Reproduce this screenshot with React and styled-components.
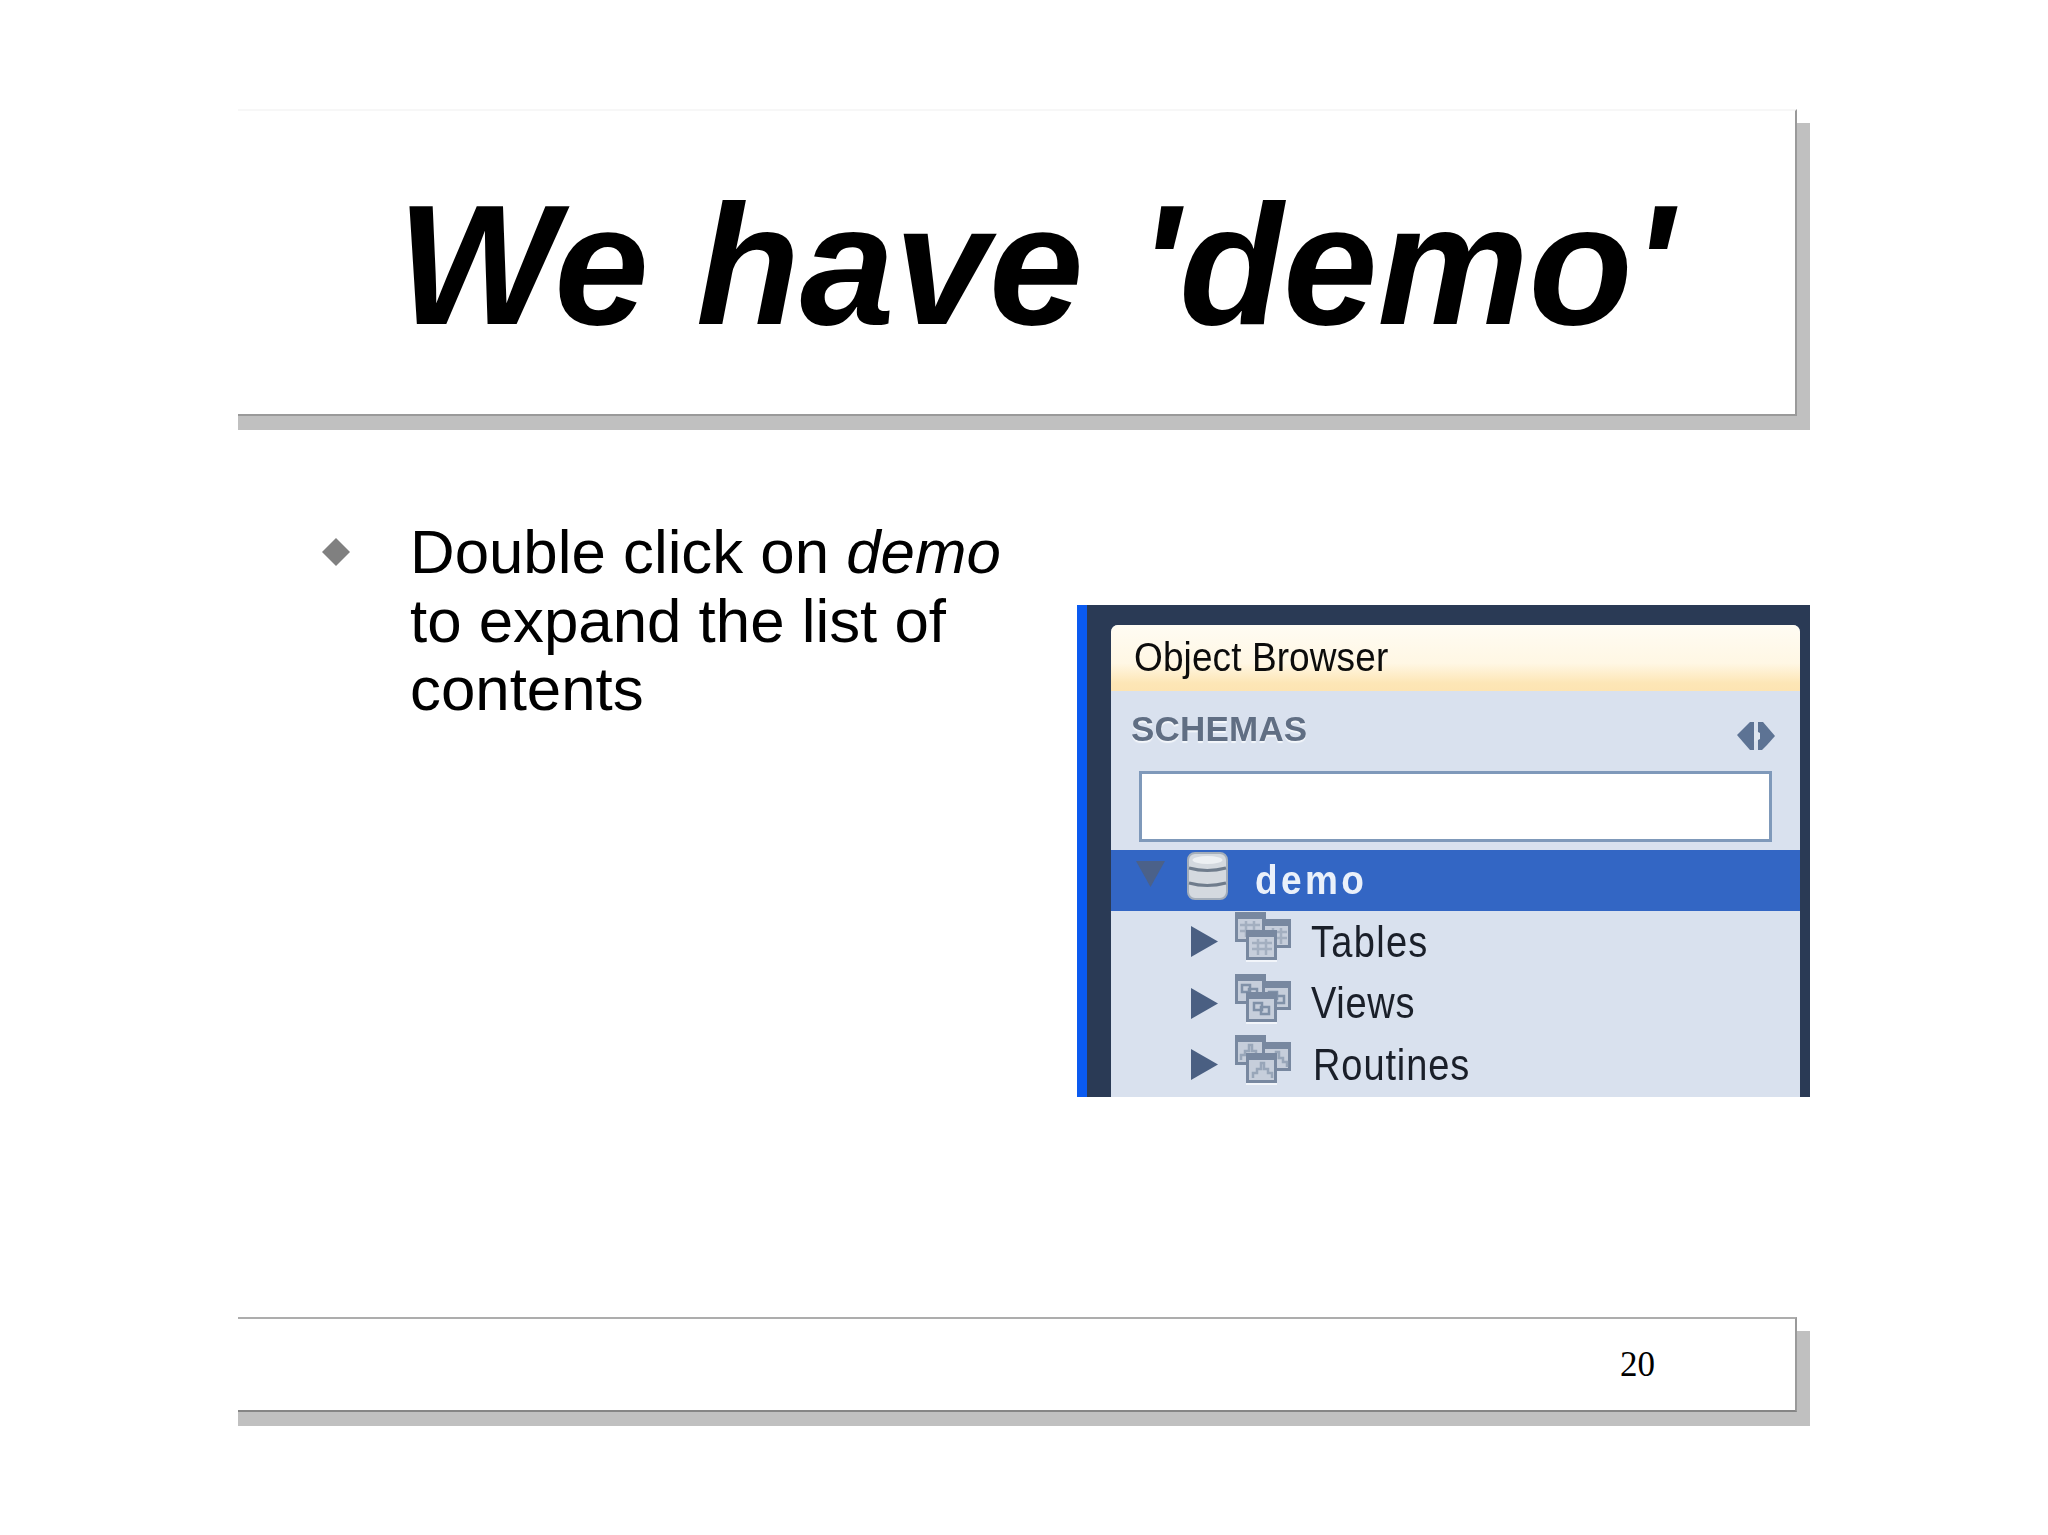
import React from "react";
import styled, { createGlobalStyle } from "styled-components";

const Global = createGlobalStyle`
  html, body { margin: 0; padding: 0; background: #fff; }
  body { font-family: "Liberation Sans", Arial, sans-serif; color: #000; }
`;

const Page = styled.div`
  width: 1559px;
  height: 1535px;
  box-sizing: border-box;
  margin-left: 238px;
  padding-top: 109px;
  display: flex;
  flex-direction: column;
`;

const TitleBox = styled.header`
  height: 307px;
  box-sizing: border-box;
  border-top: 2px solid #f7f7f7;
  border-right: 2px solid #9a9a9a;
  border-bottom: 2px solid #9a9a9a;
  background: #fff;
  box-shadow: 13px 14px 0 #c0c0c0, 0 14px 0 #c0c0c0;
  display: flex;
  align-items: center;
  justify-content: flex-end;
  padding-right: 122px;
`;

const Title = styled.h1`
  margin: 4px 0 0;
  font: italic 700 170px/1 "Liberation Sans", Arial, sans-serif;
  white-space: nowrap;
`;

const QuotedWord = styled.span`
  margin-left: 8px;
`;

const Content = styled.main`
  flex: none;
  height: 901px;
  display: flex;
  justify-content: space-between;
`;

const BulletColumn = styled.section`
  display: flex;
  padding: 102px 0 0 84px;
  gap: 60px;
`;

const Diamond = styled.svg`
  width: 28px;
  height: 28px;
  margin-top: 20px;
  flex: none;
`;

const BodyText = styled.p`
  margin: 0;
  width: 640px;
  font-size: 61.8px;
  line-height: 68.6px;
`;

const Shot = styled.figure`
  margin: 189px -13px 0 0;
  width: 733px;
  height: 492px;
  box-sizing: border-box;
  border-left: 10px solid #0a5af0;
  background: #2a3a55;
  padding: 20px 10px 0 24px;
  overflow: hidden;
`;

const Panel = styled.div`
  height: 472px;
  background: #d9e1ee;
  border-radius: 7px 7px 0 0;
  overflow: hidden;
`;

const PanelHeader = styled.div`
  height: 66px;
  box-sizing: border-box;
  padding-left: 23px;
  display: flex;
  align-items: center;
  background: linear-gradient(#fffcf3 0, #fff7e4 58%, #fde6b6 88%, #fde4b2 100%);
`;

const PanelTitle = styled.span`
  font-size: 37px;
  letter-spacing: 0.1px;
  color: #0c0c0c;
  transform: scaleY(1.08);
  filter: blur(0.5px);
  white-space: nowrap;
`;

const SchemasRow = styled.div`
  height: 80px;
  box-sizing: border-box;
  padding: 18px 24px 0 20px;
  display: flex;
  justify-content: space-between;
  align-items: flex-start;
`;

const SchemasLabel = styled.span`
  font-size: 35px;
  font-weight: 700;
  line-height: 40px;
  letter-spacing: 0.2px;
  color: #606e83;
  text-shadow: 0 2px 1px #f4f7fb;
  filter: blur(0.7px);
`;

const Refresh = styled.svg`
  width: 40px;
  height: 32px;
  margin-top: 11px;
  filter: blur(0.7px);
`;

const SearchBox = styled.div`
  height: 71px;
  box-sizing: border-box;
  margin: 0 28px 8px;
  border: 3px solid #7f99ba;
  background: #fff;
`;

const SchemaRow = styled.div`
  height: 61px;
  background: #3366c4;
  display: flex;
  align-items: center;
  padding-left: 25px;
`;

const DownArrow = styled.svg`
  width: 29px;
  height: 26px;
  margin-top: -14px;
  flex: none;
`;

const DbIcon = styled.svg`
  width: 41px;
  height: 48px;
  margin-left: 22px;
  margin-top: -10px;
  flex: none;
  filter: blur(0.5px);
`;

const SchemaName = styled.span`
  margin-left: 27px;
  font-size: 37px;
  font-weight: 700;
  letter-spacing: 3.4px;
  color: #eaf0fa;
  transform: scaleY(1.08);
  filter: blur(0.7px);
`;

const TreeRow = styled.div`
  height: 61.5px;
  display: flex;
  align-items: center;
  padding-left: 80px;
`;

const RightArrow = styled.svg`
  width: 27px;
  height: 31px;
  flex: none;
`;

const FolderIcon = styled.svg`
  width: 56px;
  height: 50px;
  margin-left: 17px;
  margin-top: -9px;
  flex: none;
  filter: blur(0.5px);
`;

const TreeLabel = styled.span`
  margin-left: ${(p) => p.$gap}px;
  font-size: 38px;
  letter-spacing: ${(p) => p.$tracking}px;
  line-height: 1;
  color: #1a1f29;
  transform: scaleY(1.16);
  filter: blur(0.6px);
  white-space: nowrap;
`;

const Footer = styled.footer`
  height: 95px;
  box-sizing: border-box;
  border-top: 2px solid #adadad;
  border-right: 2px solid #9a9a9a;
  border-bottom: 2px solid #858585;
  background: #fff;
  box-shadow: 13px 14px 0 #c0c0c0, 0 14px 0 #c0c0c0;
  display: flex;
  align-items: center;
  justify-content: flex-end;
  padding-right: 140px;
`;

const PageNumber = styled.span`
  font: 35px/1 "Liberation Serif", "Times New Roman", serif;
`;

const Mini = ({ glyph }) => {
  const win = (x, y, w, h) => (
    <g>
      <rect x={x + 1.5} y={y + 1.5} width={w - 3} height={h - 3} fill="#c6cedb" stroke="#7888a0" strokeWidth="3" />
      <rect x={x} y={y} width={w} height="7" fill="#7888a0" />
    </g>
  );
  const marks = (x, y) => {
    if (glyph === "grid") {
      return (
        <path
          d={`M${x + 5} ${y + 13}h20M${x + 5} ${y + 19}h20M${x + 11} ${y + 9}v16M${x + 19} ${y + 9}v16`}
          stroke="#a3afc0"
          strokeWidth="2.5"
          fill="none"
        />
      );
    }
    if (glyph === "view") {
      return (
        <path
          d={`M${x + 7} ${y + 11}h8v7h-8zM${x + 14} ${y + 15}h8v7h-8z`}
          stroke="#8091a8"
          strokeWidth="2.5"
          fill="none"
        />
      );
    }
    return (
      <path
        d={`M${x + 6} ${y + 25}v-5h4v-4h4v-6h3v6h4v4h4v5`}
        stroke="#98a6b9"
        strokeWidth="2.5"
        fill="none"
      />
    );
  };
  return (
    <FolderIcon viewBox="0 0 56 50">
      <rect x="11" y="47" width="31" height="3" fill="#f2f5fa" />
      {win(0, 0, 31, 30)}
      {marks(0, 0)}
      {win(27, 7, 29, 29)}
      {marks(27, 7)}
      {win(11, 18, 31, 30)}
      {marks(12, 18)}
    </FolderIcon>
  );
};

const Arrow = () => (
  <RightArrow viewBox="0 0 27 31">
    <path d="M0 0L27 15.5L0 31Z" fill="#4a5f82" />
  </RightArrow>
);

export default function App() {
  return (
    <>
      <Global />
      <Page>
        <TitleBox>
          <Title>
            We have <QuotedWord>'demo'</QuotedWord>
          </Title>
        </TitleBox>
        <Content>
          <BulletColumn>
            <Diamond viewBox="0 0 28 28">
              <path d="M14 0L28 14L14 28L0 14Z" fill="#808080" />
            </Diamond>
            <BodyText>
              Double click on <em>demo</em>
              <br />
              to expand the list of
              <br />
              contents
            </BodyText>
          </BulletColumn>
          <Shot>
            <Panel>
              <PanelHeader>
                <PanelTitle>Object Browser</PanelTitle>
              </PanelHeader>
              <SchemasRow>
                <SchemasLabel>SCHEMAS</SchemasLabel>
                <Refresh viewBox="0 0 40 32">
                  <path d="M1 15L9 7L14 2H18V30H14L7 22Z" fill="#5d7394" />
                  <path d="M39 16L31 25L26 30H22V2H27L33 9Z" fill="#5d7394" />
                  <path d="M18 10L24 13V19L18 22Z" fill="#dfe6f0" />
                </Refresh>
              </SchemasRow>
              <SearchBox />
              <SchemaRow>
                <DownArrow viewBox="0 0 29 26">
                  <path d="M0 0H29L14.5 26Z" fill="#4b6189" />
                </DownArrow>
                <DbIcon viewBox="0 0 41 48">
                  <rect x="1" y="1" width="39" height="46" rx="7" fill="#d4d9df" stroke="#a4aeba" strokeWidth="2" />
                  <path d="M2 16Q20 21 39 16M2 31Q20 36 39 31" stroke="#6f7c8c" strokeWidth="3" fill="none" />
                  <ellipse cx="20.5" cy="8" rx="15" ry="4" fill="#edf0f3" />
                </DbIcon>
                <SchemaName>demo</SchemaName>
              </SchemaRow>
              <TreeRow>
                <Arrow />
                <Mini glyph="grid" />
                <TreeLabel $gap={20} $tracking={1.3}>Tables</TreeLabel>
              </TreeRow>
              <TreeRow>
                <Arrow />
                <Mini glyph="view" />
                <TreeLabel $gap={20} $tracking={0.7}>Views</TreeLabel>
              </TreeRow>
              <TreeRow>
                <Arrow />
                <Mini glyph="route" />
                <TreeLabel $gap={22} $tracking={0.9}>Routines</TreeLabel>
              </TreeRow>
            </Panel>
          </Shot>
        </Content>
        <Footer>
          <PageNumber>20</PageNumber>
        </Footer>
      </Page>
    </>
  );
}
